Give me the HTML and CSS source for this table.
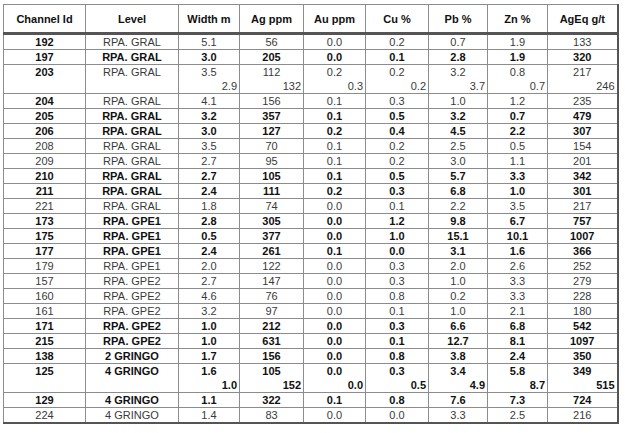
FILE: index.html
```html
<!DOCTYPE html>
<html>
<head>
<meta charset="utf-8">
<link rel="stylesheet" href="styles.css">
</head>
<body>
<table class="grid">
<colgroup>
<col class="c1"><col class="c2"><col class="c3"><col class="c4"><col class="c5"><col class="c6"><col class="c7"><col class="c8"><col class="c9">
</colgroup>
<thead>
<tr><th>Channel Id</th><th>Level</th><th>Width m</th><th>Ag ppm</th><th>Au ppm</th><th>Cu %</th><th>Pb %</th><th>Zn %</th><th>AgEq g/t</th></tr>
</thead>
<tbody>
<tr class="mix"><td class="b">192</td><td>RPA. GRAL</td><td>5.1</td><td>56</td><td>0.0</td><td>0.2</td><td>0.7</td><td>1.9</td><td>133</td></tr>
<tr class="hi"><td>197</td><td>RPA. GRAL</td><td>3.0</td><td>205</td><td>0.0</td><td>0.1</td><td>2.8</td><td>1.9</td><td>320</td></tr>
<tr class="mix"><td class="b">203</td><td>RPA. GRAL</td><td><div>3.5</div><div class="sub">2.9</div></td><td><div>112</div><div class="sub">132</div></td><td><div>0.2</div><div class="sub">0.3</div></td><td><div>0.2</div><div class="sub">0.2</div></td><td><div>3.2</div><div class="sub">3.7</div></td><td><div>0.8</div><div class="sub">0.7</div></td><td><div>217</div><div class="sub">246</div></td></tr>
<tr class="mix"><td class="b">204</td><td>RPA. GRAL</td><td>4.1</td><td>156</td><td>0.1</td><td>0.3</td><td>1.0</td><td>1.2</td><td>235</td></tr>
<tr class="hi"><td>205</td><td>RPA. GRAL</td><td>3.2</td><td>357</td><td>0.1</td><td>0.5</td><td>3.2</td><td>0.7</td><td>479</td></tr>
<tr class="hi"><td>206</td><td>RPA. GRAL</td><td>3.0</td><td>127</td><td>0.2</td><td>0.4</td><td>4.5</td><td>2.2</td><td>307</td></tr>
<tr class="reg"><td>208</td><td>RPA. GRAL</td><td>3.5</td><td>70</td><td>0.1</td><td>0.2</td><td>2.5</td><td>0.5</td><td>154</td></tr>
<tr class="reg"><td>209</td><td>RPA. GRAL</td><td>2.7</td><td>95</td><td>0.1</td><td>0.2</td><td>3.0</td><td>1.1</td><td>201</td></tr>
<tr class="hi"><td>210</td><td>RPA. GRAL</td><td>2.7</td><td>105</td><td>0.1</td><td>0.5</td><td>5.7</td><td>3.3</td><td>342</td></tr>
<tr class="hi"><td>211</td><td>RPA. GRAL</td><td>2.4</td><td>111</td><td>0.2</td><td>0.3</td><td>6.8</td><td>1.0</td><td>301</td></tr>
<tr class="reg"><td>221</td><td>RPA. GRAL</td><td>1.8</td><td>74</td><td>0.0</td><td>0.1</td><td>2.2</td><td>3.5</td><td>217</td></tr>
<tr class="hi"><td>173</td><td>RPA. GPE1</td><td>2.8</td><td>305</td><td>0.0</td><td>1.2</td><td>9.8</td><td>6.7</td><td>757</td></tr>
<tr class="hi"><td>175</td><td>RPA. GPE1</td><td>0.5</td><td>377</td><td>0.0</td><td>1.0</td><td>15.1</td><td>10.1</td><td>1007</td></tr>
<tr class="hi"><td>177</td><td>RPA. GPE1</td><td>2.4</td><td>261</td><td>0.1</td><td>0.0</td><td>3.1</td><td>1.6</td><td>366</td></tr>
<tr class="reg"><td>179</td><td>RPA. GPE1</td><td>2.0</td><td>122</td><td>0.0</td><td>0.3</td><td>2.0</td><td>2.6</td><td>252</td></tr>
<tr class="reg"><td>157</td><td>RPA. GPE2</td><td>2.7</td><td>147</td><td>0.0</td><td>0.3</td><td>1.0</td><td>3.3</td><td>279</td></tr>
<tr class="reg"><td>160</td><td>RPA. GPE2</td><td>4.6</td><td>76</td><td>0.0</td><td>0.8</td><td>0.2</td><td>3.3</td><td>228</td></tr>
<tr class="reg"><td>161</td><td>RPA. GPE2</td><td>3.2</td><td>97</td><td>0.0</td><td>0.1</td><td>1.0</td><td>2.1</td><td>180</td></tr>
<tr class="hi"><td>171</td><td>RPA. GPE2</td><td>1.0</td><td>212</td><td>0.0</td><td>0.3</td><td>6.6</td><td>6.8</td><td>542</td></tr>
<tr class="hi"><td>215</td><td>RPA. GPE2</td><td>1.0</td><td>631</td><td>0.0</td><td>0.1</td><td>12.7</td><td>8.1</td><td>1097</td></tr>
<tr class="hi"><td>138</td><td>2 GRINGO</td><td>1.7</td><td>156</td><td>0.0</td><td>0.8</td><td>3.8</td><td>2.4</td><td>350</td></tr>
<tr class="hi"><td>125</td><td>4 GRINGO</td><td><div>1.6</div><div class="sub">1.0</div></td><td><div>105</div><div class="sub">152</div></td><td><div>0.0</div><div class="sub">0.0</div></td><td><div>0.3</div><div class="sub">0.5</div></td><td><div>3.4</div><div class="sub">4.9</div></td><td><div>5.8</div><div class="sub">8.7</div></td><td><div>349</div><div class="sub">515</div></td></tr>
<tr class="hi"><td>129</td><td>4 GRINGO</td><td>1.1</td><td>322</td><td>0.1</td><td>0.8</td><td>7.6</td><td>7.3</td><td>724</td></tr>
<tr class="reg"><td>224</td><td>4 GRINGO</td><td>1.4</td><td>83</td><td>0.0</td><td>0.0</td><td>3.3</td><td>2.5</td><td>216</td></tr>
</tbody>
</table>
</body>
</html>
```
FILE: styles.css
```css
html, body {
  margin: 0;
  padding: 0;
  background: #ffffff;
}
body {
  font-family: "Liberation Sans", Arial, sans-serif;
  color: #111;
}
.grid {
  margin: 4px 0 0 3px;
  border-collapse: collapse;
  table-layout: fixed;
  width: 615px;
  border-top: 1px solid #8c8c8c;
  border-left: 1px solid #8c8c8c;
  border-right: 2px solid #555;
  border-bottom: 2px solid #555;
}
.c1 { width: 82px; }
.c2 { width: 93px; }
.c3 { width: 61px; }
.c4 { width: 64px; }
.c5 { width: 62px; }
.c6 { width: 63px; }
.c7 { width: 59px; }
.c8 { width: 60px; }
.c9 { width: 70px; }
.grid th {
  height: 27px;
  padding: 0;
  font-size: 11px;
  font-weight: bold;
  color: #111;
  text-align: center;
  vertical-align: middle;
  border-left: 1px solid #8c8c8c;
  border-right: 1px solid #8c8c8c;
  border-bottom: 3px solid #555;
}
.grid td {
  height: 14px;
  padding: 0;
  line-height: 14px;
  font-size: 11px;
  text-align: center;
  vertical-align: top;
  border: 1px solid #8c8c8c;
  white-space: nowrap;
}
.reg td,
.mix td {
  font-weight: normal;
  color: #3a3a3a;
}
.hi td,
.mix td.b {
  font-weight: bold;
  color: #111;
}
.grid .sub {
  text-align: right;
  padding-right: 2px;
}
```
